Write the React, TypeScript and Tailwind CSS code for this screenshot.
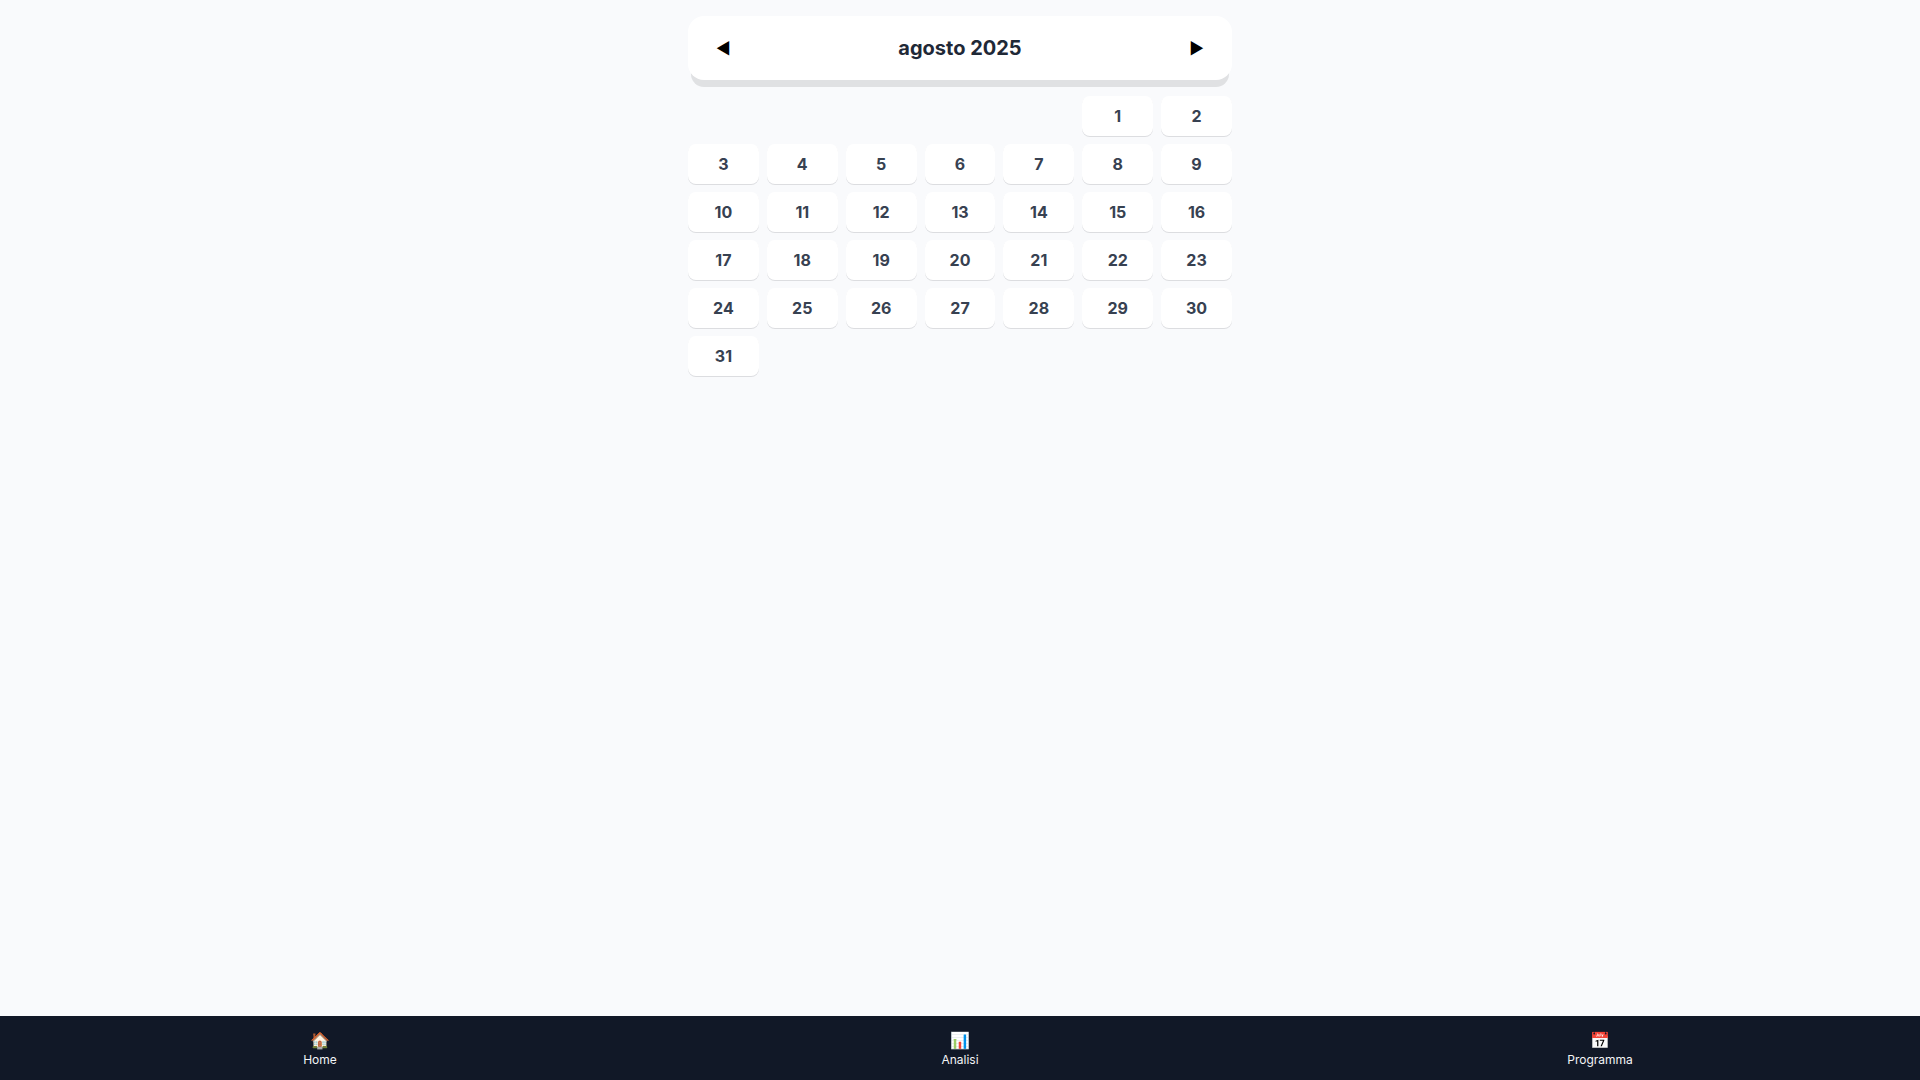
const days = Array.from({ length: 31 }, (_, i) => i + 1);
const links = [
  { icon: "🏠", label: "Home" },
  { icon: "📊", label: "Analisi" },
  { icon: "📅", label: "Programma" },
];

export default function App() {
  return (
    <div className="flex min-h-screen flex-col bg-[#f9fafc] font-['Inter',sans-serif]">
      <main className="mx-auto w-full max-w-xl flex-1 p-4">
        <header className="mb-4 flex items-center justify-between rounded-2xl bg-white p-4 shadow-[0_10px_0_-3px_#e0e1e3]">
          <button type="button" aria-label="Mese precedente" className="px-3 text-base leading-8">◀</button>
          <h1 className="text-xl font-bold text-[#1f2937]">agosto 2025</h1>
          <button type="button" aria-label="Mese successivo" className="px-3 text-base leading-8">▶</button>
        </header>
        <div className="grid grid-cols-7 gap-2">
          {days.map((day) => (
            <button type="button" key={day} className="rounded-lg bg-white py-2 font-bold text-[#374151] shadow-[0_1px_0_#dcdde0] first:col-start-6">{day}</button>
          ))}
        </div>
      </main>
      <nav className="grid h-16 grid-cols-3 bg-[#111827] text-gray-100">
        {links.map((link) => (
          <a href="#" key={link.label} className="flex flex-col items-center justify-center text-xs">
            <span className="text-base">{link.icon}</span>
            <span>{link.label}</span>
          </a>
        ))}
      </nav>
    </div>
  );
}
